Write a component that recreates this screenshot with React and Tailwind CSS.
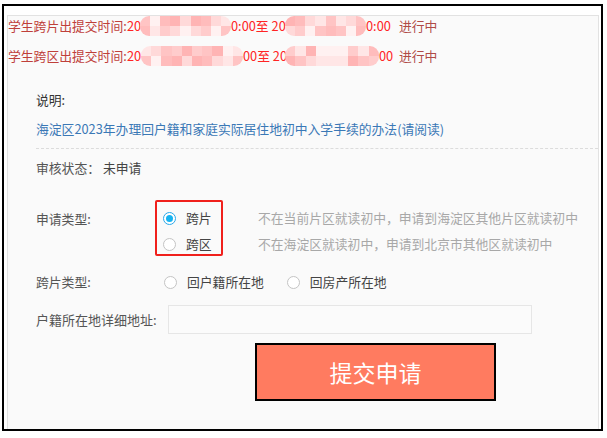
import React from "react";

const PAL = [
  "bg-[#ffd9d9]",
  "bg-[#ffc4c4]",
  "bg-[#ffb4b4]",
  "bg-[#ffe6e6]",
  "bg-[#ffcccc]",
  "bg-[#fff1f1]",
  "bg-[#ffbcbc]",
];

function Mosaic({ cols, cls, seed }) {
  const cells = [];
  for (let r = 0; r < 2; r++) {
    for (let c = 0; c < cols; c++) {
      const i = (c * 3 + r * 5 + seed * 7 + ((c * c + seed) % 5)) % PAL.length;
      cells.push(<span key={r + "-" + c} className={"block " + PAL[i]} />);
    }
  }
  return (
    <span
      className={
        "inline-grid shrink-0 grid-rows-2 h-[20px] rounded-[9px] overflow-hidden blur-[0.7px] " +
        cls
      }
    >
      {cells}
    </span>
  );
}

function Radio({ checked }) {
  if (checked) {
    return (
      <span className="flex shrink-0 items-center justify-center w-[13px] h-[13px] rounded-full border border-[#29a8ea] bg-white">
        <span className="block w-[7px] h-[7px] rounded-full bg-[#17b3f0]" />
      </span>
    );
  }
  return <span className="block shrink-0 w-[13px] h-[13px] rounded-full border border-[#c4c4c4] bg-white" />;
}

export default function App() {
  const font = { fontFamily: '"Noto Sans CJK SC", "Noto Sans", sans-serif' };
  return (
    <div className="w-[607px] h-[438px] bg-white overflow-hidden" style={font}>
      <div className="ml-[2px] mt-[4px] w-[601px] h-[427px] border-2 border-black bg-white pt-[9px] pl-[3px] pr-[2px] flex flex-col">
        <div className="flex-1 bg-[#fafafa] border-t border-l border-r border-[#e2e2e2] flex flex-col">
          {/* top status lines */}
          <div className="mt-[1px] h-[18px] flex items-center whitespace-nowrap leading-[18px]">
            <span className="w-[119px] shrink-0 text-[12.8px] text-[#bf3f3a]">学生跨片出提交时间:</span>
            <span className="w-[13px] shrink-0 text-[12.8px] text-[#ff2424]">20</span>
            <Mosaic cols={9} seed={1} cls="w-[91px] grid-cols-9" />
            <span className="w-[54px] shrink-0 text-[12.8px] text-[#ff2424]">0:00至 20</span>
            <Mosaic cols={8} seed={2} cls="w-[81px] grid-cols-8" />
            <span className="w-[29px] shrink-0 text-[12.8px] text-[#ff2424]">0:00</span>
            <span className="ml-[4px] text-[12.8px] text-[#b04a46]">进行中</span>
          </div>
          <div className="mt-[12px] h-[18px] flex items-center whitespace-nowrap leading-[18px]">
            <span className="w-[119px] shrink-0 text-[12.8px] text-[#bf3f3a]">学生跨区出提交时间:</span>
            <span className="w-[14px] shrink-0 text-[12.8px] text-[#ff2424]">20</span>
            <Mosaic cols={10} seed={3} cls="w-[102px] grid-cols-10" />
            <span className="w-[42px] shrink-0 text-[12.8px] text-[#ff2424]">00至 20</span>
            <Mosaic cols={9} seed={4} cls="w-[94px] grid-cols-9" />
            <span className="w-[16px] shrink-0 text-[12.8px] text-[#ff2424]">00</span>
            <span className="ml-[4px] text-[12.8px] text-[#b04a46]">进行中</span>
          </div>

          {/* body */}
          <div className="pl-[28px] flex flex-col">
            <div className="mt-[26px] h-[18px] leading-[18px] text-[12.8px] text-[#333]">说明:</div>
            <div className="mt-[11px] h-[18px] leading-[18px] text-[12.8px] text-[#3a78b6] whitespace-nowrap">
              海淀区2023年办理回户籍和家庭实际居住地初中入学手续的办法(请阅读)
            </div>
            <div className="mt-[10px] border-t border-dashed border-[#dcdcdc]" />
            <div className="mt-[10px] h-[18px] leading-[18px] text-[12.8px] text-[#555] flex whitespace-nowrap">
              <span>审核状态：</span>
              <span className="ml-[3px] text-[#444]">未申请</span>
            </div>

            {/* application type */}
            <div className="mt-[23px] flex items-start whitespace-nowrap">
              <div className="w-[119px] shrink-0 mt-[10px] h-[18px] leading-[18px] text-[12.8px] text-[#555]">申请类型:</div>
              <div className="w-[68px] shrink-0 h-[56px] border-2 border-[#f0201c] rounded-[2px] pt-[7px] pl-[6px] flex flex-col gap-[8px]">
                <div className="h-[18px] flex items-center gap-[10px]">
                  <Radio checked />
                  <span className="text-[12.8px] leading-[18px] text-[#444]">跨片</span>
                </div>
                <div className="h-[18px] flex items-center gap-[10px]">
                  <Radio />
                  <span className="text-[12.8px] leading-[18px] text-[#444]">跨区</span>
                </div>
              </div>
              <div className="ml-[35px] pt-[9px] flex flex-col gap-[8px] text-[12.8px] text-[#a8a8a8]">
                <div className="h-[18px] leading-[18px]">不在当前片区就读初中，申请到海淀区其他片区就读初中</div>
                <div className="h-[18px] leading-[18px]">不在海淀区就读初中，申请到北京市其他区就读初中</div>
              </div>
            </div>

            {/* cross type */}
            <div className="mt-[17px] h-[18px] flex items-center whitespace-nowrap">
              <div className="w-[119px] shrink-0 leading-[18px] text-[12.8px] text-[#555]">跨片类型:</div>
              <div className="ml-[9px] flex items-center gap-[10px]">
                <Radio />
                <span className="text-[12.8px] leading-[18px] text-[#444]">回户籍所在地</span>
              </div>
              <div className="ml-[23px] flex items-center gap-[10px]">
                <Radio />
                <span className="text-[12.8px] leading-[18px] text-[#444]">回房产所在地</span>
              </div>
            </div>

            {/* address */}
            <div className="mt-[14px] h-[29px] flex items-center whitespace-nowrap">
              <div className="w-[132px] shrink-0 leading-[18px] text-[13px] text-[#555]">户籍所在地详细地址:</div>
              <input
                type="text"
                className="w-[364px] h-[29px] border border-[#e6e6e6] bg-[#fbfbfb] outline-none"
              />
            </div>

            {/* submit */}
            <div className="mt-[9px] ml-[219px]">
              <button className="w-[241px] h-[58px] border-2 border-black bg-[#ff7b60] text-white text-[23px] leading-none flex items-center justify-center">
                提交申请
              </button>
            </div>
          </div>
        </div>
      </div>
    </div>
  );
}
